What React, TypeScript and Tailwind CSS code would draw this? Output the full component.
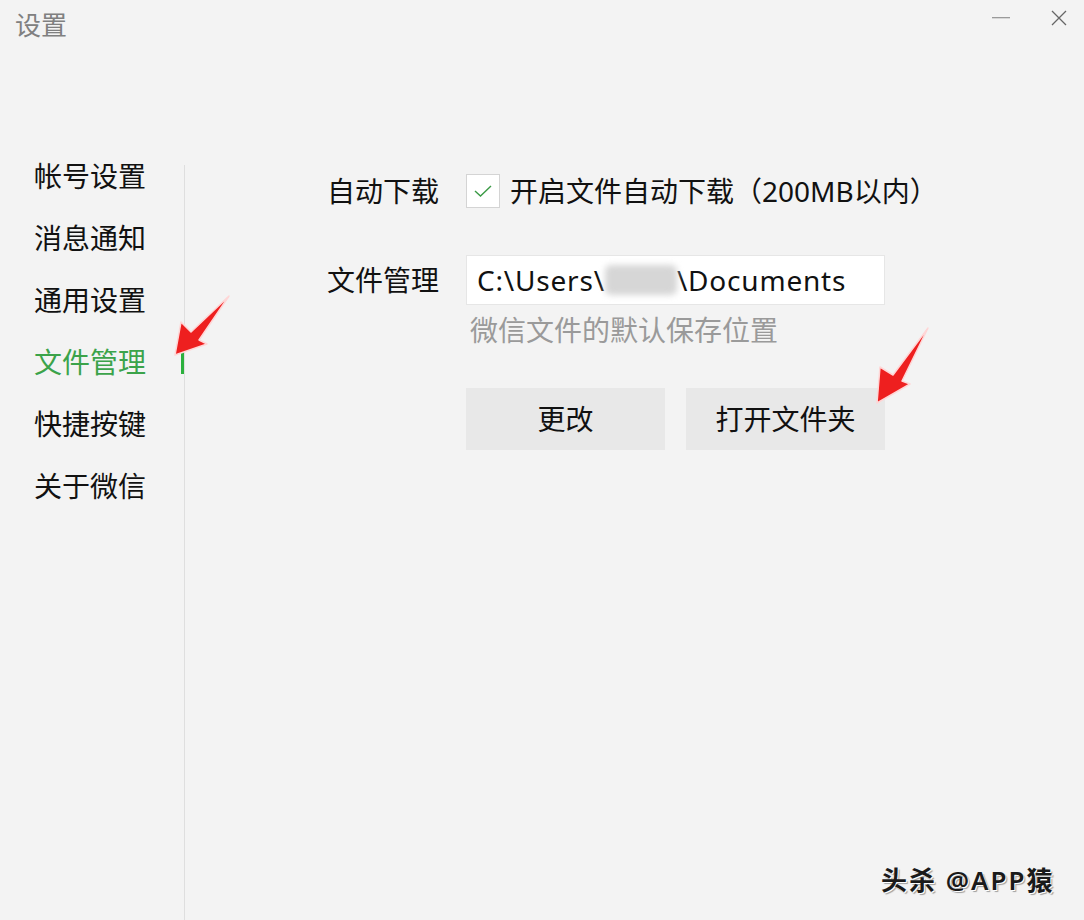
const font = 'font-["Noto_Sans","Noto_Sans_CJK_SC",sans-serif]';

const navItems = ['帐号设置', '消息通知', '通用设置', '文件管理', '快捷按键', '关于微信'];

function Arrow({ points }: { points: string }) {
  return (
    <svg width="80" height="100" viewBox="0 0 80 100">
      <polygon points={points} fill="#ee1f1f" stroke="#ffd6d6" strokeWidth="1.5" strokeLinejoin="round" />
    </svg>
  );
}

export default function App() {
  const active = '文件管理';

  return (
    <div className={`relative w-[1084px] h-[920px] overflow-hidden bg-[#f3f3f3] text-[#111] ${font}`}>
      {/* title bar */}
      <div className="h-[145px] flex items-start justify-between">
        <div className="pl-[15px] pt-[10px] text-[26px] leading-[30px] text-[#808080]">设置</div>
        <div className="flex items-start">
          <div className="w-[66px] h-[36px] flex items-center justify-center">
            <svg width="18" height="2" viewBox="0 0 18 2">
              <rect x="0" y="0" width="18" height="1.3" fill="#9a9a9a" />
            </svg>
          </div>
          <div className="w-[50px] h-[36px] flex items-start justify-center pt-[10px]">
            <svg width="16" height="16" viewBox="0 0 16 16">
              <path d="M1 1 L15 15 M15 1 L1 15" stroke="#666" strokeWidth="1.3" />
            </svg>
          </div>
        </div>
      </div>

      <div className="flex h-[775px]">
        {/* sidebar */}
        <nav className="w-[184px] pl-[34px] flex flex-col">
          {navItems.map((item) => (
            <div
              key={item}
              className={`relative h-[62px] flex items-center text-[28px] ${
                item === active ? 'text-[#3ba34a]' : 'text-[#111]'
              }`}
            >
              {item}
              {item === active && (
                <span className="absolute right-0 top-[20px] w-[3px] h-[23px] bg-[#2bb03d]" />
              )}
            </div>
          ))}
        </nav>
        <div className="w-px mt-[20px] bg-[#dedede]" />

        {/* content */}
        <div className="pl-[142px] flex flex-col">
          <div className="mt-[29px] h-[34px] flex items-center">
            <div className="w-[139px] text-[28px]">自动下载</div>
            <div className="w-[34px] h-[34px] bg-white border border-[#d4d4d4] flex items-center justify-center">
              <svg width="20" height="14" viewBox="0 0 20 14">
                <path d="M2 7 L7.5 12 L18 2" fill="none" stroke="#3a9a45" strokeWidth="1.4" />
              </svg>
            </div>
            <span className="ml-[10px] text-[28px]">开启文件自动下载（200MB以内）</span>
          </div>

          <div className="mt-[47px] h-[50px] flex items-center">
            <div className="w-[139px] text-[28px]">文件管理</div>
            <div className="w-[419px] h-[50px] bg-white border border-[#e6e6e6] flex items-center pl-[10px] text-[28px] tracking-[0.8px]">
              <span>C:\Users\</span>
              <span className="inline-block w-[72px] h-[30px] bg-[#d6d6d6] rounded-[6px] blur-[3px]" />
              <span>\Documents</span>
            </div>
          </div>

          <div className="mt-[10px] ml-[143px] h-[30px] leading-[30px] text-[28px] text-[#9a9a9a]">
            微信文件的默认保存位置
          </div>

          <div className="mt-[43px] ml-[139px] flex gap-[21px]">
            <button className="w-[199px] h-[62px] bg-[#e8e8e8] text-[28px] text-[#111]">更改</button>
            <button className="w-[199px] h-[62px] bg-[#e8e8e8] text-[28px] text-[#111]">打开文件夹</button>
          </div>
        </div>
      </div>

      {/* annotation arrows */}
      <div className="absolute left-[160px] top-[285px]">
        <Arrow points="15,70 21,37 31,47 69,11 39,55 47,59" />
      </div>
      <div className="absolute left-[860px] top-[320px]">
        <Arrow points="17,83 20,47 33,55 68,8 42,61 50,64" />
      </div>

      {/* watermark */}
      <div className="absolute left-[881px] top-[864px] text-[26px] leading-[32px] font-semibold tracking-[2px] text-[#1a1a1a] [text-shadow:1px_1px_0_#fff,2px_2px_1px_rgba(0,0,0,0.35)]">
        头杀 @APP猿
      </div>
    </div>
  );
}
